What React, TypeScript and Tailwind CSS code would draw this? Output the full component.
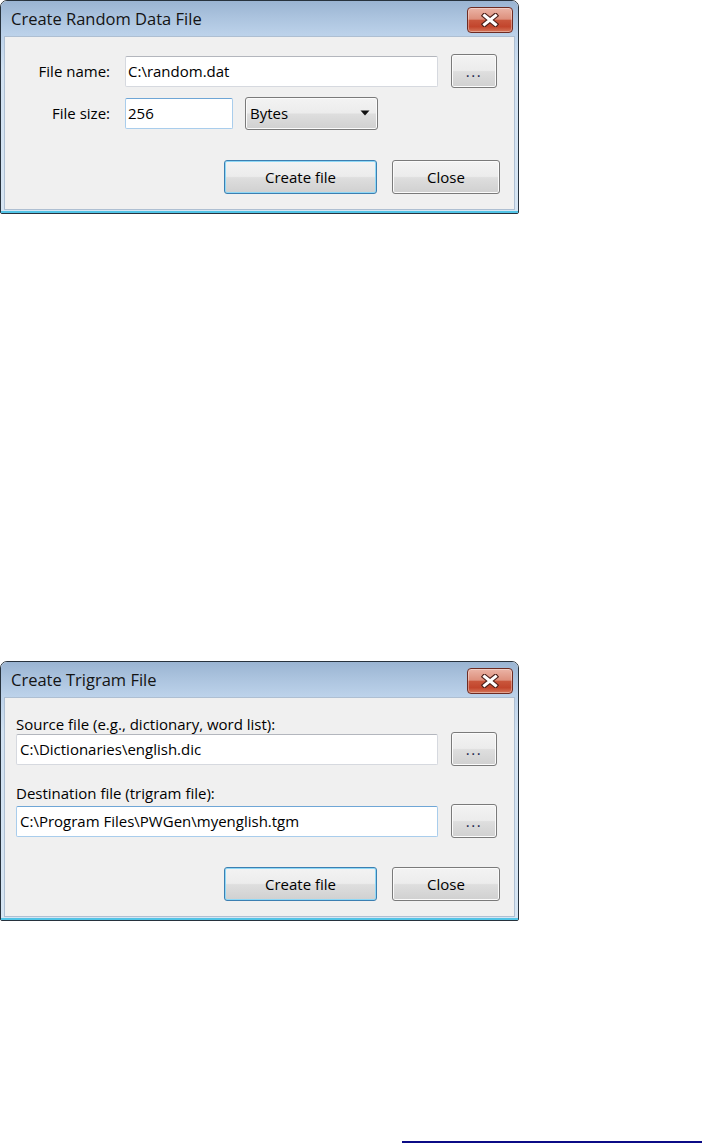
import React from "react";

function CaptionClose() {
  return (
    <div className="mt-[6px] flex h-[26px] w-[46px] items-center justify-center rounded-[4px] border border-[#6e2b22] bg-[linear-gradient(to_bottom,#ebb4a6_0%,#dd907d_46%,#c9553b_52%,#c2452c_78%,#d6775b_100%)] shadow-[inset_0_0_0_1px_rgba(255,255,255,0.35)]">
      <svg width="18" height="14" viewBox="0 0 18 14">
        <path d="M3.5 2.5 L14.5 11.5 M14.5 2.5 L3.5 11.5" stroke="#4b1e18" strokeWidth="5.2" strokeLinecap="square" fill="none" />
        <path d="M3.5 2.5 L14.5 11.5 M14.5 2.5 L3.5 11.5" stroke="#ffffff" strokeWidth="3" strokeLinecap="square" fill="none" />
      </svg>
    </div>
  );
}

function Window({ title, children }: { title: string; children: React.ReactNode }) {
  return (
    <div className="w-[519px] rounded-t-[7px] rounded-b-[2px] border border-[#27323d]">
      <div className="rounded-t-[6px] border-b-2 border-[#52c4e6] bg-[linear-gradient(to_bottom,#9ab4d2_0px,#abc3de_16px,#bcd2ea_34px,#d2e2f2_70px,#d6e5f3_100%)] pb-[1px]">
        <div className="flex h-[35px] items-start justify-between pl-[10px] pr-[5px]">
          <div className="pt-[8px] text-[16.5px] leading-[20px] text-[#141414]">{title}</div>
          <CaptionClose />
        </div>
        <div className="mx-[3px] border border-[#aebfd2] bg-[#f0f0f0]">{children}</div>
      </div>
    </div>
  );
}

function Input({ value, focused, className }: { value: string; focused?: boolean; className: string }) {
  return (
    <div
      className={
        (focused
          ? "border-[#a9cdec] border-t-[#6fa6d6] "
          : "border-[#d6d9df] border-t-[#b3b6bd] ") +
        "flex h-[31px] items-center rounded-[2px] border bg-white pl-[2px] text-[15px] leading-[20px] text-black " +
        className
      }
    >
      {value}
    </div>
  );
}

function Btn({ children, def, className }: { children: React.ReactNode; def?: boolean; className: string }) {
  return (
    <div
      className={
        (def
          ? "border-[#3c7fb1] shadow-[inset_0_0_0_1px_#8fd8f6] "
          : "border-[#7a7a7a] shadow-[inset_0_0_0_1px_#fbfbfb] ") +
        "flex h-[34px] items-center justify-center rounded-[3px] border bg-[linear-gradient(to_bottom,#f3f3f3_0%,#ececec_48%,#dedede_52%,#d0d0d0_100%)] text-[15px] leading-[20px] text-black " +
        className
      }
    >
      {children}
    </div>
  );
}

function Dropdown({ value, className }: { value: string; className: string }) {
  return (
    <div
      className={
        "flex h-[33px] items-center justify-between rounded-[3px] border border-[#7a7a7a] bg-[linear-gradient(to_bottom,#f3f3f3_0%,#ececec_48%,#dedede_52%,#d0d0d0_100%)] pl-[4px] pr-[7px] text-[15px] leading-[20px] text-black shadow-[inset_0_0_0_1px_#fbfbfb] " +
        className
      }
    >
      <span>{value}</span>
      <svg width="10" height="6" viewBox="0 0 10 6">
        <path d="M0.5 0.5 L9.5 0.5 L5 5.5 Z" fill="#111" />
      </svg>
    </div>
  );
}

function Dots() {
  return <span className="tracking-[1.5px] text-[#1c1c4c]">...</span>;
}

export default function App() {
  return (
    <div className="h-[1143px] w-[702px] overflow-hidden bg-white font-['Open_Sans','Noto_Sans',sans-serif] text-black">
      <Window title="Create Random Data File">
        <div className="flex flex-col pb-[15px] pt-[17px]">
          <div className="flex h-[34px] items-center">
            <div className="w-[105px] text-right text-[15px] leading-[20px]">File name:</div>
            <Input className="ml-[15px] w-[313px]" value="C:\random.dat" />
            <Btn className="ml-[13px] w-[46px]">
              <Dots />
            </Btn>
          </div>
          <div className="mt-[8px] flex h-[34px] items-center">
            <div className="w-[105px] text-right text-[15px] leading-[20px]">File size:</div>
            <Input focused className="ml-[15px] w-[108px]" value="256" />
            <Dropdown className="ml-[12px] w-[133px]" value="Bytes" />
          </div>
          <div className="mt-[30px] flex h-[34px] justify-end gap-[15px] pr-[14px]">
            <Btn def className="w-[153px]">
              Create file
            </Btn>
            <Btn className="w-[108px]">Close</Btn>
          </div>
        </div>
      </Window>

      <div className="mt-[447px]">
        <Window title="Create Trigram File">
          <div className="flex flex-col pb-[15px] pl-[11px] pt-[18px]">
            <div className="text-[15px] leading-[16px]">Source file (e.g., dictionary, word list):</div>
            <div className="flex h-[34px] items-center">
              <Input className="w-[422px] pl-[3px]" value="C:\Dictionaries\english.dic" />
              <Btn className="ml-[13px] w-[46px]">
                <Dots />
              </Btn>
            </div>
            <div className="mt-[19px] text-[15px] leading-[16px]">Destination file (trigram file):</div>
            <div className="mt-[3px] flex h-[34px] items-center">
              <Input focused className="w-[422px] pl-[3px]" value="C:\Program Files\PWGen\myenglish.tgm" />
              <Btn className="ml-[13px] w-[46px]">
                <Dots />
              </Btn>
            </div>
            <div className="mt-[29px] flex h-[34px] justify-end gap-[15px] pr-[14px]">
              <Btn def className="w-[153px]">
                Create file
              </Btn>
              <Btn className="w-[108px]">Close</Btn>
            </div>
          </div>
        </Window>
      </div>

      <div className="ml-[402px] mt-[220px] h-[2px] w-[300px] bg-[#0b0b86]" />
    </div>
  );
}
